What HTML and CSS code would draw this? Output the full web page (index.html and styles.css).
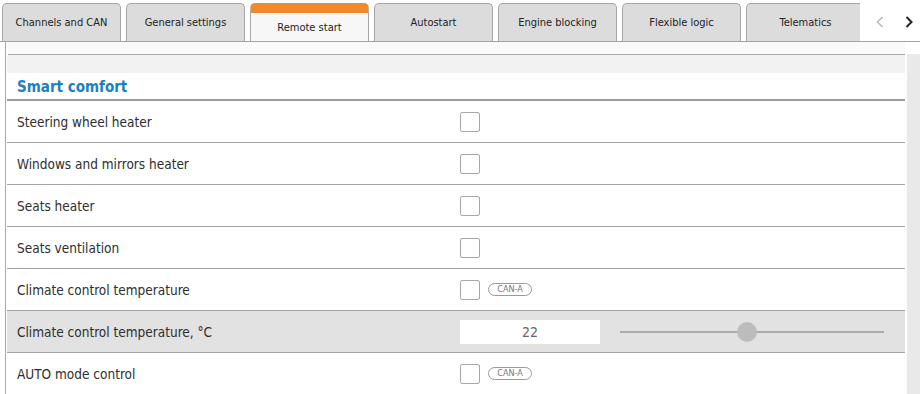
FILE: index.html
```html
<!DOCTYPE html>
<html lang="en">
<head>
<meta charset="UTF-8" />
<meta name="viewport" content="width=device-width, initial-scale=1" />
<title>Remote start</title>
<link rel="stylesheet" href="styles.css">
</head>
<body>

<nav class="tabbar">
  <div class="tabs">
    <div class="tab">Channels and CAN</div>
    <div class="tab">General settings</div>
    <div class="tab active">Remote start</div>
    <div class="tab">Autostart</div>
    <div class="tab">Engine blocking</div>
    <div class="tab">Flexible logic</div>
    <div class="tab">Telematics</div>
  </div>
  <div class="arrows">
    <span class="arrow disabled">
      <svg width="8" height="12" viewBox="0 0 8 12"><path d="M6.5 1 L1.5 6 L6.5 11" fill="none" stroke="currentColor" stroke-width="1.6"/></svg>
    </span>
    <span class="arrow">
      <svg width="8" height="12" viewBox="0 0 8 12"><path d="M1.5 1 L6.5 6 L1.5 11" fill="none" stroke="currentColor" stroke-width="2"/></svg>
    </span>
  </div>
</nav>

<main class="main">
  <section class="panel">
    <div class="panel-top"></div>
    <div class="panel-band"></div>
    <h2 class="section-title">Smart comfort</h2>

    <div class="row">
      <div class="label">Steering wheel heater</div>
      <span class="check"></span>
    </div>
    <div class="row">
      <div class="label">Windows and mirrors heater</div>
      <span class="check"></span>
    </div>
    <div class="row">
      <div class="label">Seats heater</div>
      <span class="check"></span>
    </div>
    <div class="row">
      <div class="label">Seats ventilation</div>
      <span class="check"></span>
    </div>
    <div class="row">
      <div class="label">Climate control temperature</div>
      <span class="check"></span>
      <span class="badge">CAN-A</span>
    </div>
    <div class="row shaded">
      <div class="label">Climate control temperature, °C</div>
      <div class="value">22</div>
      <div class="slider">
        <div class="track"></div>
        <div class="thumb" style="left: 48%"></div>
      </div>
    </div>
    <div class="row">
      <div class="label">AUTO mode control</div>
      <span class="check"></span>
      <span class="badge">CAN-A</span>
    </div>
  </section>
  <div class="scrollbar"></div>
</main>

</body>
</html>
```

FILE: styles.css
```css
* {
  box-sizing: border-box;
}
body {
  margin: 0;
  background: #fff;
  color: #333;
  font-family: "DejaVu Sans Condensed", "DejaVu Sans", sans-serif;
  overflow: hidden;
}

/* Tabs */
.tabbar {
  display: flex;
  height: 42px;
  border-bottom: 1px solid #a3a3a3;
}
.tabs {
  display: flex;
  gap: 5px;
  width: 860px;
  padding: 3px 0 0 2px;
  overflow: hidden;
}
.tab {
  flex: 0 0 119px;
  height: 38px;
  background: #dcdcdc;
  border: 1px solid #a6a6a6;
  border-bottom: none;
  border-radius: 5px 5px 0 0;
  font-size: 11px;
  color: #222;
  text-align: center;
  line-height: 37px;
}
.tab.active {
  background: #f7f7f7;
  border-top: 10px solid #f28a2c;
  line-height: 30px;
}
.arrows {
  flex: 1;
  display: flex;
  align-items: center;
  padding-top: 2px;
}
.arrow {
  display: flex;
  color: #222;
  margin-left: 4px;
}
.arrow.disabled {
  color: #bbb;
  margin-left: 16px;
  margin-right: 17px;
}

/* Content */
.main {
  display: flex;
}
.panel {
  flex: 1;
  margin-left: 5px;
  padding: 0 2px 0 1px;
  border-left: 1px solid #a8a8a8;
  min-height: 360px;
}
.panel-top {
  height: 13px;
  background: #fafafa;
  border-bottom: 1px solid #a9a9a9;
  margin-left: 1px;
}
.panel-band {
  height: 18px;
  background: #f2f2f2;
}
.section-title {
  margin: 0;
  height: 28px;
  padding: 4px 10px 0;
  font-size: 15px;
  font-weight: bold;
  color: #1b7fc2;
  border-bottom: 2px solid #9c9c9c;
  line-height: 20px;
}

.row {
  display: flex;
  align-items: center;
  height: 42px;
  padding-left: 10px;
  border-bottom: 1px solid #a3a3a3;
}
.row.shaded {
  background: #e2e2e2;
}
.label {
  width: 443px;
  font-size: 13.5px;
  color: #2e2e2e;
}
.check {
  width: 20px;
  height: 20px;
  border: 1px solid #a7a7a7;
  border-radius: 2px;
  background: #fff;
}
.badge {
  margin-left: 8px;
  width: 44px;
  height: 13px;
  border: 1px solid #9a9a9a;
  border-radius: 7px;
  font-size: 9px;
  line-height: 11px;
  color: #777;
  text-align: center;
}
.value {
  width: 140px;
  height: 24px;
  background: #fff;
  font-size: 14px;
  color: #666;
  text-align: center;
  line-height: 24px;
}
.slider {
  position: relative;
  margin-left: 20px;
  width: 264px;
  height: 20px;
}
.track {
  position: absolute;
  left: 0;
  right: 0;
  top: 9px;
  height: 2px;
  background: #adadad;
}
.thumb {
  position: absolute;
  top: 0;
  width: 20px;
  height: 20px;
  margin-left: -10px;
  border-radius: 50%;
  background: #bcbcbc;
}

.scrollbar {
  width: 13px;
  margin-top: 12px;
  background: #e9e9e9;
  min-height: 340px;
}
```
